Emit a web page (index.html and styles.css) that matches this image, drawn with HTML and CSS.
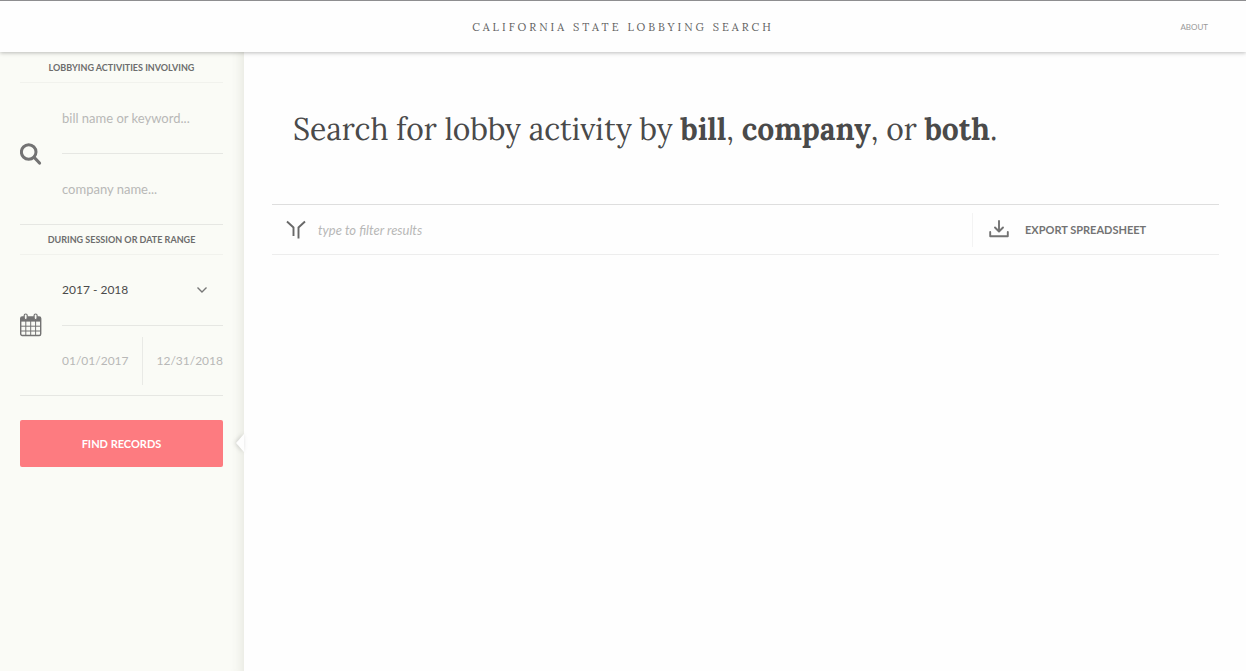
FILE: index.html
```html
<!DOCTYPE html>
<html lang="en">
<head>
<meta charset="utf-8">
<meta name="viewport" content="width=device-width, initial-scale=1">
<title>California State Lobbying Search</title>
<link rel="stylesheet" href="styles.css">
</head>
<body>
<header class="topbar">
  <h1 class="site-title">CALIFORNIA STATE LOBBYING SEARCH</h1>
  <a class="about" href="#about">ABOUT</a>
</header>
<div class="layout">
  <form class="sidebar">
    <h2 class="group-title">LOBBYING ACTIVITIES INVOLVING</h2>
    <div class="group">
      <svg class="group-icon" viewBox="0 0 22 24" aria-hidden="true"><circle cx="8.700" cy="10" r="7.300" fill="none" stroke="currentColor" stroke-width="3"/><path d="M14.300 15.500L19.500 21" stroke="currentColor" stroke-width="3.200" stroke-linecap="round"/></svg>
      <div class="fields">
        <div class="field"><input class="input" type="text" aria-label="Bill name or keyword" placeholder="bill name or keyword..."></div>
        <div class="field"><input class="input" type="text" aria-label="Company name" placeholder="company name..."></div>
      </div>
    </div>
    <h2 class="group-title">DURING SESSION OR DATE RANGE</h2>
    <div class="group">
      <svg class="group-icon" viewBox="0 0 22 24" aria-hidden="true">
        <rect x="0.7" y="4" width="20" height="18.500" rx="1.5" fill="none" stroke="currentColor" stroke-width="1.4"/>
        <path d="M1 4h19.500v4.600H1z" fill="currentColor"/>
        <path d="M5.800 8v15M10.700 8v15M15.600 8v15M1 13.200h19.500M1 18h19.500" stroke="currentColor" stroke-width="1"/>
        <rect x="4.200" y="1" width="3" height="5.500" rx="1.500" fill="#fafbf6" stroke="currentColor" stroke-width="1.200"/>
        <rect x="14.100" y="1" width="3" height="5.500" rx="1.500" fill="#fafbf6" stroke="currentColor" stroke-width="1.200"/>
      </svg>
      <div class="fields">
        <div class="field session">
          <select class="select" aria-label="Session"><option>2017 - 2018</option><option>2015 - 2016</option></select>
          <svg class="chevron" viewBox="0 0 12 8" aria-hidden="true"><path d="M1.500 1.500L6 6l4.500-4.500" fill="none" stroke="currentColor" stroke-width="1.400"/></svg>
        </div>
        <div class="field dates">
          <input class="input date" type="text" aria-label="Start date" placeholder="01/01/2017">
          <input class="input date end" type="text" aria-label="End date" placeholder="12/31/2018">
        </div>
      </div>
    </div>
    <div class="submit-row">
      <button class="submit" type="submit">FIND RECORDS</button>
      <span class="pointer"></span>
    </div>
  </form>
  <main class="content">
    <p class="intro">Search for lobby activity by <strong>bill</strong>, <strong>company</strong>, or <strong>both</strong>.</p>
    <div class="toolbar">
      <label class="filter">
        <svg class="filter-icon" viewBox="0 0 20 20" aria-hidden="true"><path d="M1 1.500l6.500 6v8.500M19 1.500l-6.500 6v11" fill="none" stroke="currentColor" stroke-width="1.900"/></svg>
        <input class="input filter-input" type="text" aria-label="Filter results" placeholder="type to filter results">
      </label>
      <button class="export" type="button">
        <svg class="export-icon" viewBox="0 0 20 20" aria-hidden="true"><path d="M10 1v10M6 7.500l4 4 4-4M1.200 12v4.200h17.600V12" fill="none" stroke="currentColor" stroke-width="1.900" stroke-linejoin="round" stroke-linecap="round"/></svg>
        EXPORT SPREADSHEET
      </button>
    </div>
  </main>
</div>
</body>
</html>
```
FILE: styles.css
```css
* {
  box-sizing: border-box;
}

body {
  margin: 0;
  min-height: 100vh;
  display: flex;
  flex-direction: column;
  background: #fefefe;
  color: #4a4a4a;
  font-family: Lato, "Liberation Sans", sans-serif;
  font-size: 13px;
}

.topbar {
  position: relative;
  z-index: 1;
  display: grid;
  grid-template-columns: 1fr auto 1fr;
  align-items: center;
  height: 52px;
  padding: 0 38px;
  border-top: 1px solid #8e8e90;
  background: #fefefe;
  box-shadow: 0 1px 4px rgba(0, 0, 0, 0.26);
}

.site-title {
  grid-column: 2;
  margin: 0;
  font: 400 11px/16px Lora, "Liberation Serif", serif;
  letter-spacing: 3px;
  color: #626262;
}

.about {
  justify-self: end;
  font-size: 8px;
  line-height: 12px;
  color: #999;
  text-decoration: none;
}

.layout {
  flex: 1;
  display: flex;
}

.sidebar {
  flex: none;
  width: 244px;
  padding: 1px 21px 24px 20px;
  background: #fafbf6;
  box-shadow: inset -14px 0 12px -12px rgba(70, 70, 50, 0.12);
}

.group-title {
  margin: 0;
  padding: 7px 0 6px;
  border-bottom: 1px solid #f1f2ed;
  font-size: 9px;
  font-weight: 700;
  line-height: 16px;
  text-align: center;
  color: #6d6d6d;
}

.group {
  display: flex;
  align-items: center;
  border-bottom: 1px solid #e6e7e3;
}

.group-icon {
  flex: none;
  width: 22px;
  height: 24px;
  margin-right: 20px;
  color: #737373;
}

.fields {
  flex: 1;
  min-width: 0;
}

.field {
  display: flex;
  align-items: center;
  height: 70px;
}

.field:first-child {
  height: 71px;
  border-bottom: 1px solid #e6e7e3;
}

.field.dates {
  height: 69px;
}

.input,
.select {
  width: 100%;
  min-width: 0;
  padding: 0;
  border: 0;
  outline: 0;
  background: transparent;
  color: #4a4a4a;
  font: 400 13px/20px Lato, "Liberation Sans", sans-serif;
}

.input::placeholder {
  color: #b8b8b7;
  opacity: 1;
}

.select {
  appearance: none;
  font-size: 12px;
}

.chevron {
  flex: none;
  width: 12px;
  height: 8px;
  margin-right: 15px;
  color: #777;
  pointer-events: none;
}

.input.date {
  flex: 1;
  height: 48px;
  font-size: 12px;
}

.input.end {
  border-left: 1px solid #e9eae6;
  text-align: right;
}

.submit-row {
  position: relative;
  margin-top: 24px;
}

.submit {
  display: block;
  width: 100%;
  height: 47px;
  border: 0;
  border-radius: 2px;
  background: #fd7b80;
  color: #fff;
  font: 700 11px/16px Lato, "Liberation Sans", sans-serif;
}

.pointer {
  position: absolute;
  top: 14px;
  right: -21px;
  width: 8px;
  height: 18px;
  filter: drop-shadow(-1px 0 2px rgba(0, 0, 0, 0.18));
}

.pointer::before {
  content: "";
  display: block;
  border: solid transparent;
  border-width: 9px 8px 9px 0;
  border-right-color: #fefefe;
}

.content {
  flex: 1;
  min-width: 0;
  padding: 53px 27px 24px 28px;
}

.intro {
  margin: 0 0 51px;
  padding-left: 21px;
  font: 400 30px/48px Lora, "Liberation Serif", serif;
}

.toolbar {
  display: flex;
  align-items: center;
  height: 51px;
  border-top: 1px solid #dedede;
  border-bottom: 1px solid #ededed;
}

.filter {
  flex: 1;
  display: flex;
  align-items: center;
  gap: 12px;
  padding-left: 14px;
}

.filter-icon {
  flex: none;
  width: 20px;
  height: 20px;
  color: #686868;
}

.filter-input {
  font-style: italic;
}

.export {
  display: flex;
  align-items: center;
  gap: 16px;
  width: 247px;
  height: 34px;
  padding: 0 16px;
  border: 0;
  border-left: 1px solid #f3f3f3;
  background: transparent;
  color: #737373;
  font: 700 11px/16px Lato, "Liberation Sans", sans-serif;
}

.export-icon {
  flex: none;
  width: 20px;
  height: 20px;
}
```
